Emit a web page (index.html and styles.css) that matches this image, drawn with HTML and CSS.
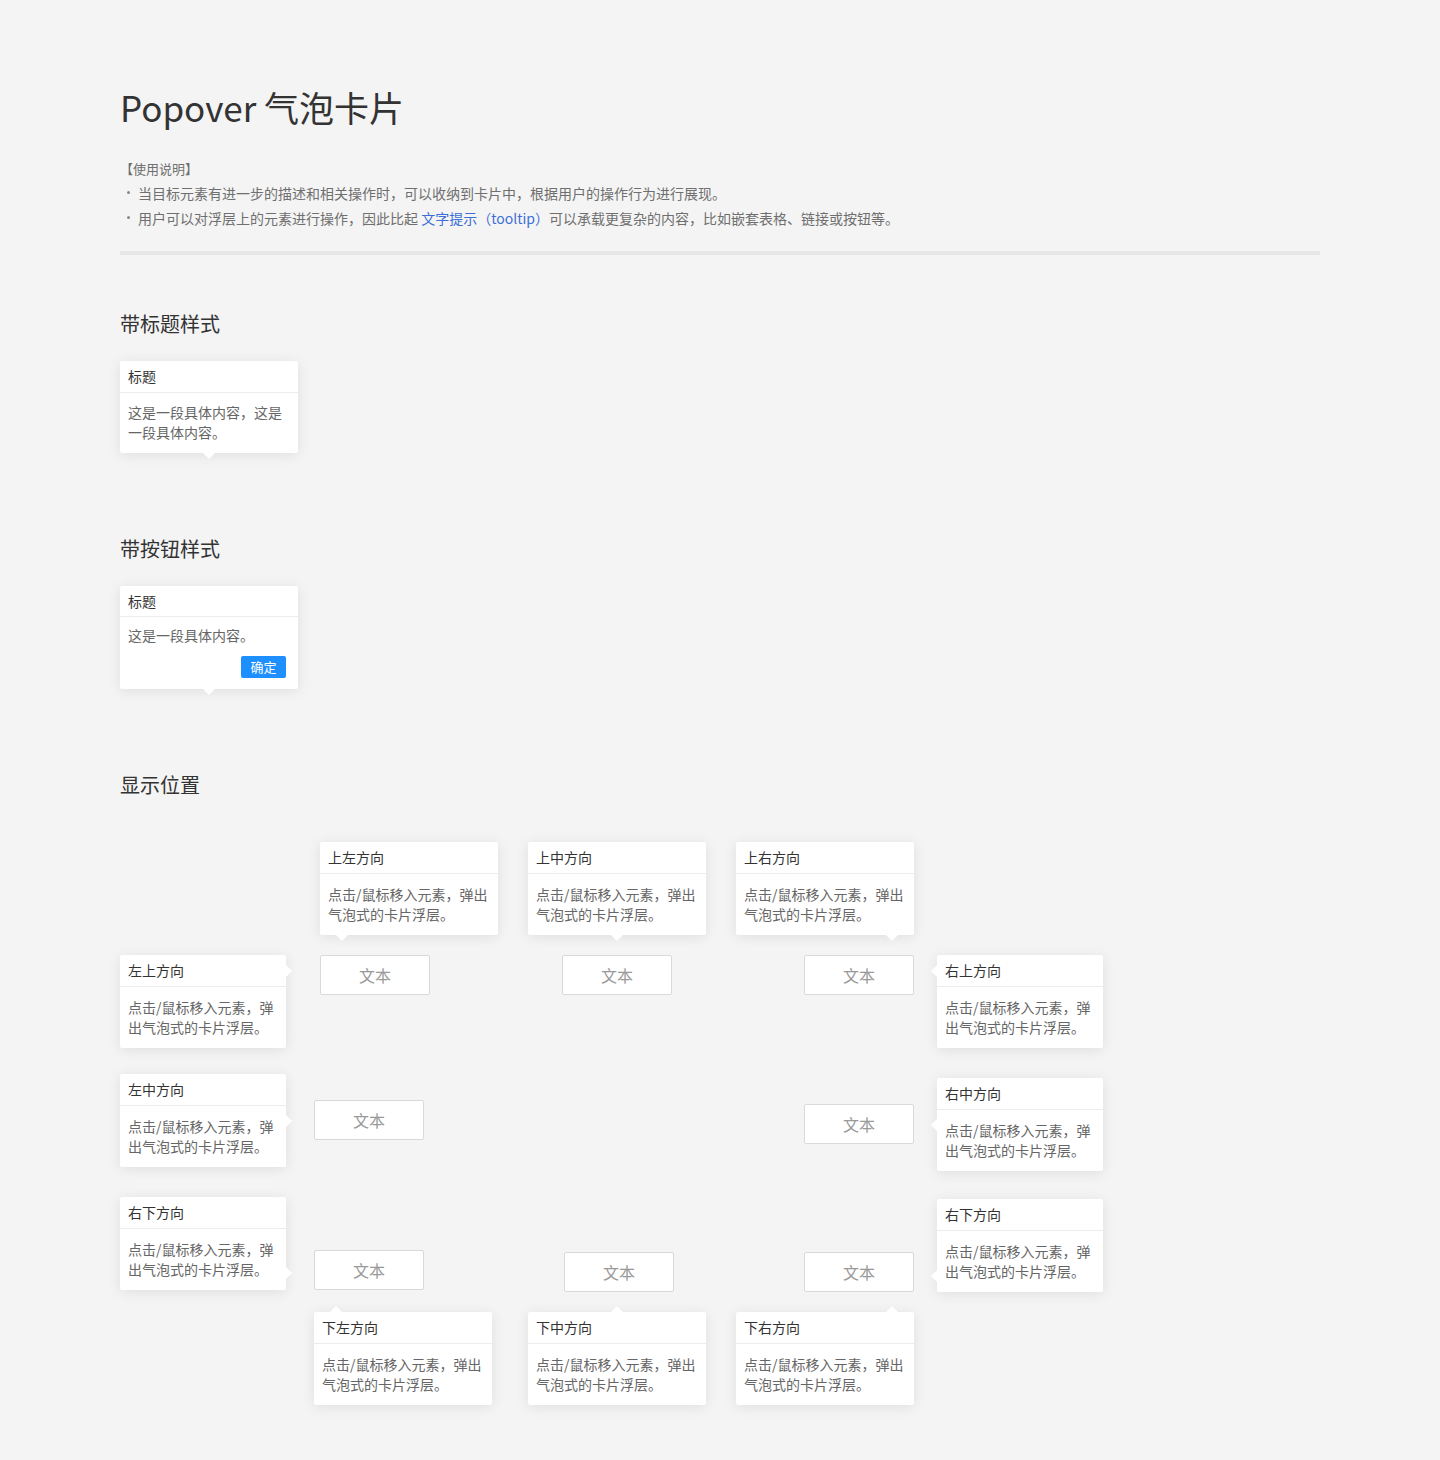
FILE: index.html
```html
<!DOCTYPE html>
<html lang="zh-CN">
<head>
<meta charset="utf-8">
<title>Popover 气泡卡片</title>
<link rel="stylesheet" href="styles.css">
</head>
<body>
<main class="page">
  <h1 class="page-title">Popover 气泡卡片</h1>
  <div class="usage">
    <p class="usage-head">【使用说明】</p>
    <ul class="usage-list">
      <li>当目标元素有进一步的描述和相关操作时，可以收纳到卡片中，根据用户的操作行为进行展现。</li>
      <li>用户可以对浮层上的元素进行操作，因此比起 <a class="link" href="#">文字提示（tooltip）</a>可以承载更复杂的内容，比如嵌套表格、链接或按钮等。</li>
    </ul>
  </div>
  <hr class="divider">

  <section class="section">
    <h2 class="section-title">带标题样式</h2>
    <div class="pop pop-static arrow-bottom-center">
      <div class="pop-title">标题</div>
      <div class="pop-body">这是一段具体内容，这是一段具体内容。</div>
    </div>
  </section>

  <section class="section">
    <h2 class="section-title">带按钮样式</h2>
    <div class="pop pop-static arrow-bottom-center">
      <div class="pop-title pop-title-short">标题</div>
      <div class="pop-body pop-body-btn">
        <p class="pop-text">这是一段具体内容。</p>
        <div class="pop-actions"><button class="btn-primary">确定</button></div>
      </div>
    </div>
  </section>

  <section class="section">
    <h2 class="section-title">显示位置</h2>
    <div class="positions">
      <div class="trigger r1c1">
        <button class="btn-text">文本</button>
        <div class="pop pop-wide place-top-left arrow-bottom-left">
          <div class="pop-title">上左方向</div>
          <div class="pop-body">点击/鼠标移入元素，弹出气泡式的卡片浮层。</div>
        </div>
        <div class="pop pop-narrow place-left-top arrow-right-top">
          <div class="pop-title">左上方向</div>
          <div class="pop-body">点击/鼠标移入元素，弹出气泡式的卡片浮层。</div>
        </div>
      </div>
      <div class="trigger r1c2">
        <button class="btn-text">文本</button>
        <div class="pop pop-wide place-top-center arrow-bottom-center">
          <div class="pop-title">上中方向</div>
          <div class="pop-body">点击/鼠标移入元素，弹出气泡式的卡片浮层。</div>
        </div>
      </div>
      <div class="trigger r1c3">
        <button class="btn-text">文本</button>
        <div class="pop pop-wide place-top-right arrow-bottom-right">
          <div class="pop-title">上右方向</div>
          <div class="pop-body">点击/鼠标移入元素，弹出气泡式的卡片浮层。</div>
        </div>
        <div class="pop pop-narrow place-right-top arrow-left-top">
          <div class="pop-title">右上方向</div>
          <div class="pop-body">点击/鼠标移入元素，弹出气泡式的卡片浮层。</div>
        </div>
      </div>

      <div class="trigger r2c1">
        <button class="btn-text">文本</button>
        <div class="pop pop-narrow place-left-center arrow-right-center">
          <div class="pop-title">左中方向</div>
          <div class="pop-body">点击/鼠标移入元素，弹出气泡式的卡片浮层。</div>
        </div>
      </div>
      <div class="trigger r2c3">
        <button class="btn-text">文本</button>
        <div class="pop pop-narrow place-right-center arrow-left-center">
          <div class="pop-title">右中方向</div>
          <div class="pop-body">点击/鼠标移入元素，弹出气泡式的卡片浮层。</div>
        </div>
      </div>

      <div class="trigger r3c1">
        <button class="btn-text">文本</button>
        <div class="pop pop-narrow place-left-bottom arrow-right-bottom">
          <div class="pop-title">右下方向</div>
          <div class="pop-body">点击/鼠标移入元素，弹出气泡式的卡片浮层。</div>
        </div>
        <div class="pop pop-wide place-bottom-left arrow-top-left">
          <div class="pop-title">下左方向</div>
          <div class="pop-body">点击/鼠标移入元素，弹出气泡式的卡片浮层。</div>
        </div>
      </div>
      <div class="trigger r3c2">
        <button class="btn-text">文本</button>
        <div class="pop pop-wide place-bottom-center arrow-top-center">
          <div class="pop-title">下中方向</div>
          <div class="pop-body">点击/鼠标移入元素，弹出气泡式的卡片浮层。</div>
        </div>
      </div>
      <div class="trigger r3c3">
        <button class="btn-text">文本</button>
        <div class="pop pop-wide place-bottom-right arrow-top-right">
          <div class="pop-title">下右方向</div>
          <div class="pop-body">点击/鼠标移入元素，弹出气泡式的卡片浮层。</div>
        </div>
        <div class="pop pop-narrow place-right-bottom arrow-left-bottom">
          <div class="pop-title">右下方向</div>
          <div class="pop-body">点击/鼠标移入元素，弹出气泡式的卡片浮层。</div>
        </div>
      </div>
    </div>
  </section>
</main>
</body>
</html>
```

FILE: styles.css
```css
* { box-sizing: border-box; }

html, body {
  margin: 0;
  padding: 0;
  background: #f4f4f4;
}

body {
  font-family: "Noto Sans CJK SC", "Noto Sans", sans-serif;
  color: #333;
  font-size: 14px;
}

.page {
  width: 1200px;
  margin: 0 0 0 120px;
  padding: 87px 0 55px;
}

.page-title {
  margin: 0;
  font-size: 35px;
  line-height: 40px;
  font-weight: 400;
  color: #333;
}

.usage {
  margin-top: 29px;
  color: #6f6f6f;
  font-size: 14px;
  line-height: 25px;
}

.usage-head {
  margin: 0;
  font-size: 13px;
}

.usage-list {
  list-style: none;
  margin: 0;
  padding: 0 0 0 18px;
}

.usage-list li {
  position: relative;
}

.usage-list li::before {
  content: "";
  position: absolute;
  left: -11px;
  top: 10px;
  width: 3px;
  height: 3px;
  border-radius: 50%;
  background: #888;
}

.link {
  color: #3c6fd6;
  text-decoration: none;
}

.divider {
  margin: 20px 0 0;
  height: 4px;
  border: 0;
  background: #e6e6e6;
}

.section {
  margin-top: 55px;
}

.section + .section {
  margin-top: 82px;
}

.section-title {
  margin: 0;
  font-size: 20px;
  line-height: 28px;
  font-weight: 400;
  color: #333;
}

/* popover card */
.pop {
  background: #fff;
  border-radius: 2px;
  box-shadow: 0 2px 14px rgba(0, 0, 0, 0.09);
  font-size: 14px;
}

.pop::after {
  content: "";
  position: absolute;
  width: 0;
  height: 0;
  border: 6px solid transparent;
}

.pop-static {
  position: relative;
  width: 178px;
  margin-top: 23px;
}

.pop-title {
  height: 32px;
  line-height: 31px;
  padding: 0 8px;
  color: #333;
  border-bottom: 1px solid #ececec;
}

.pop-title-short {
  height: 31px;
  line-height: 30px;
}

.pop-body {
  padding: 9px 8px 11px;
  line-height: 20px;
  color: #666;
}

.trigger .pop-body {
  padding: 10px 8px 11px;
}

.pop-body-btn {
  padding: 8px 12px 11px 8px;
}

.pop-text {
  margin: 0;
}

.pop-actions {
  display: flex;
  justify-content: flex-end;
  margin-top: 11px;
}

.btn-primary {
  width: 45px;
  height: 22px;
  padding: 0;
  border: 0;
  border-radius: 2px;
  background: #1e8fff;
  color: #fff;
  font-family: inherit;
  font-size: 13px;
  line-height: 22px;
}

/* positions demo */
.positions {
  display: grid;
  grid-template-columns: 248px 242px 110px;
  grid-template-rows: 145px 150px 40px;
  padding: 113px 0 113px 194px;
  margin-top: 43px;
}

.trigger {
  position: relative;
  width: 110px;
  height: 40px;
}

.r1c1 { grid-row: 1; grid-column: 1; margin-left: 6px; }
.r1c2 { grid-row: 1; grid-column: 2; }
.r1c3 { grid-row: 1; grid-column: 3; }
.r2c1 { grid-row: 2; grid-column: 1; }
.r2c3 { grid-row: 2; grid-column: 3; margin-top: 4px; }
.r3c1 { grid-row: 3; grid-column: 1; }
.r3c2 { grid-row: 3; grid-column: 2; margin: 2px 0 0 2px; }
.r3c3 { grid-row: 3; grid-column: 3; margin-top: 2px; }

.btn-text {
  width: 110px;
  height: 40px;
  padding: 0;
  border: 1px solid #d9d9d9;
  border-radius: 2px;
  background: #fff;
  color: #999;
  font-family: inherit;
  font-size: 16px;
}

.trigger .pop {
  position: absolute;
  z-index: 1;
}

.pop-wide { width: 178px; }
.pop-narrow { width: 166px; }

.place-top-left { left: 0; bottom: calc(100% + 20px); }
.place-top-center { left: -34px; bottom: calc(100% + 20px); }
.place-top-right { right: 0; bottom: calc(100% + 20px); }
.place-bottom-left { left: 0; top: calc(100% + 22px); }
.place-bottom-center { left: -36px; top: calc(100% + 20px); }
.place-bottom-right { right: 0; top: calc(100% + 20px); }
.place-left-top { right: calc(100% + 34px); top: 0; }
.place-left-center { right: calc(100% + 28px); top: -26px; }
.place-left-bottom { right: calc(100% + 28px); bottom: 0; }
.place-right-top { left: calc(100% + 23px); top: 0; }
.place-right-center { left: calc(100% + 23px); top: -26px; }
.place-right-bottom { left: calc(100% + 23px); bottom: 0; }

/* arrows */
.arrow-bottom-left::after,
.arrow-bottom-center::after,
.arrow-bottom-right::after {
  top: 100%;
  border-top-color: #fff;
  border-bottom-width: 0;
}
.arrow-bottom-left::after { left: 16px; }
.arrow-bottom-center::after { left: calc(50% - 6px); }
.arrow-bottom-right::after { right: 16px; }

.arrow-top-left::after,
.arrow-top-center::after,
.arrow-top-right::after {
  bottom: 100%;
  border-bottom-color: #fff;
  border-top-width: 0;
}
.arrow-top-left::after { left: 16px; }
.arrow-top-center::after { left: calc(50% - 6px); }
.arrow-top-right::after { right: 16px; }

.arrow-right-top::after,
.arrow-right-center::after,
.arrow-right-bottom::after {
  left: 100%;
  border-left-color: #fff;
  border-right-width: 0;
}
.arrow-right-top::after { top: 10px; }
.arrow-right-center::after { top: calc(50% - 6px); }
.arrow-right-bottom::after { bottom: 11px; }

.arrow-left-top::after,
.arrow-left-center::after,
.arrow-left-bottom::after {
  right: 100%;
  border-right-color: #fff;
  border-left-width: 0;
}
.arrow-left-top::after { top: 10px; }
.arrow-left-center::after { top: calc(50% - 6px); }
.arrow-left-bottom::after { bottom: 10px; }
```
